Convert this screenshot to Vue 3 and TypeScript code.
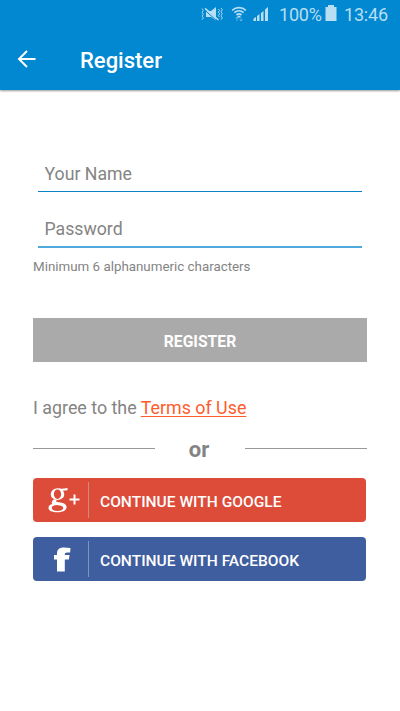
<script setup lang="ts">
import { ref } from 'vue'

const name = ref('')
const password = ref('')
</script>

<template>
  <div class="screen">
    <header class="top">
      <div class="status">
        <svg class="mute" width="22" height="16" viewBox="0 0 22 16">
          <path d="M5 5h5l5-4v13.500L10 11H5z" fill="currentColor" />
          <path d="M4 4.300 16 15" stroke="#0288d1" stroke-width="1" />
          <path d="M4 2.300 17.500 14" stroke="currentColor" stroke-width="1.600" />
          <path d="M1 2.500l1.300 1.800L1 6.200l1.300 1.900L1 10l1.300 1.900L1 13.700M17.300 3l1.400 1.600-1.400 1.600 1.400 1.700-1.400 1.700 1.400 1.600M20 2l1.300 1.800L20 5.800l1.300 2L20 9.800l1.300 2L20 13.700" fill="none" stroke="currentColor" stroke-width="1" opacity=".9" />
        </svg>
        <svg class="wifi" width="16" height="16" viewBox="0 0 16 16">
          <path d="M1.200 4.300C5 .7 11 .7 14.800 4.300M3.400 6.700c2.700-2.400 6.500-2.400 9.200 0M5.500 9c1.500-1.300 3.500-1.300 5 0" fill="none" stroke="currentColor" stroke-width="1.700" />
          <path d="m6.200 10.300 1.800-.7 1.800.7L8 12z" fill="currentColor" />
          <path d="M6 15v-4M4.600 12.500 6 11l1.400 1.500M10 11v4M8.600 13.500 10 15l1.400-1.500" fill="none" stroke="currentColor" stroke-width="1" opacity=".45" />
        </svg>
        <svg class="signal" width="16" height="16" viewBox="0 0 16 16">
          <path d="M.5 15v-2.500L3 11v4zM4 15v-5l2.500-2v7zM8 15V7l2.500-2v10zM12 15V3.500L15 1v14z" fill="currentColor" />
        </svg>
        <span class="percent">100%</span>
        <svg class="battery" width="12" height="18" viewBox="0 0 12 18">
          <path d="M3 1h6v2h2.500v14H.5V3H3z" fill="currentColor" />
        </svg>
        <span class="clock">13:46</span>
      </div>
      <div class="bar">
        <svg class="back" width="20" height="20" viewBox="0 0 20 20">
          <path d="M10 2 2 10l8 8M2 10h16.500" fill="none" stroke="#fff" stroke-width="2" />
        </svg>
        <h1>Register</h1>
      </div>
    </header>

    <main>
      <input v-model="name" class="field" type="text" placeholder="Your Name" />
      <input v-model="password" class="field second" type="password" placeholder="Password" />
      <p class="hint">Minimum 6 alphanumeric characters</p>
      <button class="register">REGISTER</button>
      <p class="terms">I agree to the <a>Terms of Use</a></p>
      <div class="divider"><i></i><b>or</b><i></i></div>
      <button class="social google">
        <span class="logo">
          <svg width="54" height="44" viewBox="0 0 54 44">
            <path fill="#fff" fill-rule="evenodd" d="M24.500 10.300a6.800 5.900 0 1 0 0 11.800a6.800 5.900 0 1 0 0-11.800zM24.500 11.400a3.600 4.800 0 1 1 0 9.600a3.600 4.800 0 1 1 0-9.600z" />
            <path fill="#fff" d="M25 10.300c3 .7 6 .3 9.500-.3v2.200l-5 .6zM21 21.200l3 .7c-1.500 1-1.500 1.800.8 2.200l3.500.6c3.500.6 5.200 2.100 5.200 4.600h-3.200c-.4-1.300-1.600-1.800-4.300-2l-4.500-.5c-3.600-.5-3.600-3.600-.5-5.600z" />
            <path fill="#fff" fill-rule="evenodd" d="M24.500 25.300c-5.300 0-9 1.600-9 4.600 0 2.800 3.500 4.300 8.700 4.300 5.600 0 9.300-1.700 9.300-4.900 0-2.700-3.500-4-9-4zM24.500 27c3.500 0 5.700.8 5.700 2.700 0 2.100-2 3.300-5.500 3.300-3.700 0-5.900-1.100-5.900-3.200 0-1.900 2.200-2.800 5.700-2.800z" />
            <path d="M36.500 21.500h10M41.500 16.500v10" stroke="#fff" stroke-width="2" />
          </svg>
        </span>
        <span class="label">CONTINUE WITH GOOGLE</span>
      </button>
      <button class="social facebook">
        <span class="logo">
          <svg width="54" height="44" viewBox="0 0 54 44">
            <path fill="#fff" d="M24 34.500V22.500h-3v-4.500h3v-1.500c0-4 2.500-6 6.500-6 2.500 0 4.800.2 7 .5l-.4 4.500h-3c-1.700 0-2.300.7-2.300 1.800v.7H36.500l-.6 4.500h-4.100v12z" />
          </svg>
        </span>
        <span class="label">CONTINUE WITH FACEBOOK</span>
      </button>
    </main>
  </div>
</template>

<style>
body {
  margin: 0;
  background: #fff;
}
</style>

<style scoped>
.screen {
  width: 400px;
  height: 711px;
  overflow: hidden;
  background: #fff;
  font-family: Roboto, sans-serif;
  color: #848484;
}
.top {
  height: 90px;
  background: #0288d1;
  box-shadow: 0 1px 2px rgba(0, 0, 0, .4);
}
.status {
  display: flex;
  align-items: center;
  height: 28px;
  padding-left: 201px;
  color: #b8def3;
  font-size: 18px;
  line-height: 28px;
}
.wifi { margin-left: 8px; }
.signal { margin-left: 6px; }
.percent {
  width: 46px;
  margin: 1px 0 0 10px;
  letter-spacing: -.2px;
}
.battery { margin-top: -2px; }
.clock {
  margin: 1px 0 0 7px;
  letter-spacing: -.2px;
}
.bar {
  display: flex;
  align-items: center;
  height: 62px;
  padding-left: 17px;
}
.back { margin-top: -1px; }
h1 {
  margin: 3px 0 0 43px;
  color: #fff;
  font-size: 22px;
  font-weight: 500;
  line-height: 28px;
}
main {
  display: flex;
  flex-direction: column;
  padding: 66px 33px 0;
}
.field {
  box-sizing: border-box;
  height: 36px;
  margin: 0 5px;
  padding: 1px 0 0 6.500px;
  border: 0;
  border-bottom: 1px solid #0b82c6;
  outline: 0;
  background: transparent;
  color: #848484;
  font: 17.700px Roboto, sans-serif;
}
.field::placeholder {
  color: #848484;
  opacity: 1;
}
.second {
  height: 37px;
  margin-top: 19px;
  border-bottom: 2px solid #4ea9dc;
}
.hint {
  margin: 9px 0 0;
  font-size: 13.350px;
  line-height: 20px;
}
.register {
  height: 44px;
  margin-top: 41px;
  padding: 2px 0 0;
  border: 0;
  background: #aaa;
  color: #fff;
  font: 700 15.700px Roboto, sans-serif;
}
.terms {
  margin: 34px 0 0;
  font-size: 17.850px;
  line-height: 24px;
}
.terms a {
  color: #ff5c2b;
  text-decoration: underline;
  text-decoration-thickness: 1px;
  text-underline-offset: 2px;
}
.divider {
  display: flex;
  justify-content: space-between;
  height: 30px;
  margin-top: 16px;
}
.divider i {
  width: 122px;
  height: 1px;
  margin-top: 12px;
  background: #999;
}
.divider b {
  margin-right: 2px;
  font-size: 22px;
  line-height: 28px;
}
.social {
  display: flex;
  align-items: center;
  width: 333px;
  height: 44px;
  margin-top: 12px;
  padding: 0;
  border: 0;
  border-radius: 4px;
  color: #fff;
  font: 500 15.550px Roboto, sans-serif;
}
.google { background: #dd4b39; }
.facebook {
  margin-top: 15px;
  background: #3f5e9f;
}
.logo {
  width: 55px;
  height: 36px;
  border-right: 1px solid rgba(190, 200, 220, .5);
}
.logo svg {
  display: block;
  margin-top: -4px;
}
.label {
  margin: 3px 0 0 11px;
  white-space: nowrap;
}
</style>
